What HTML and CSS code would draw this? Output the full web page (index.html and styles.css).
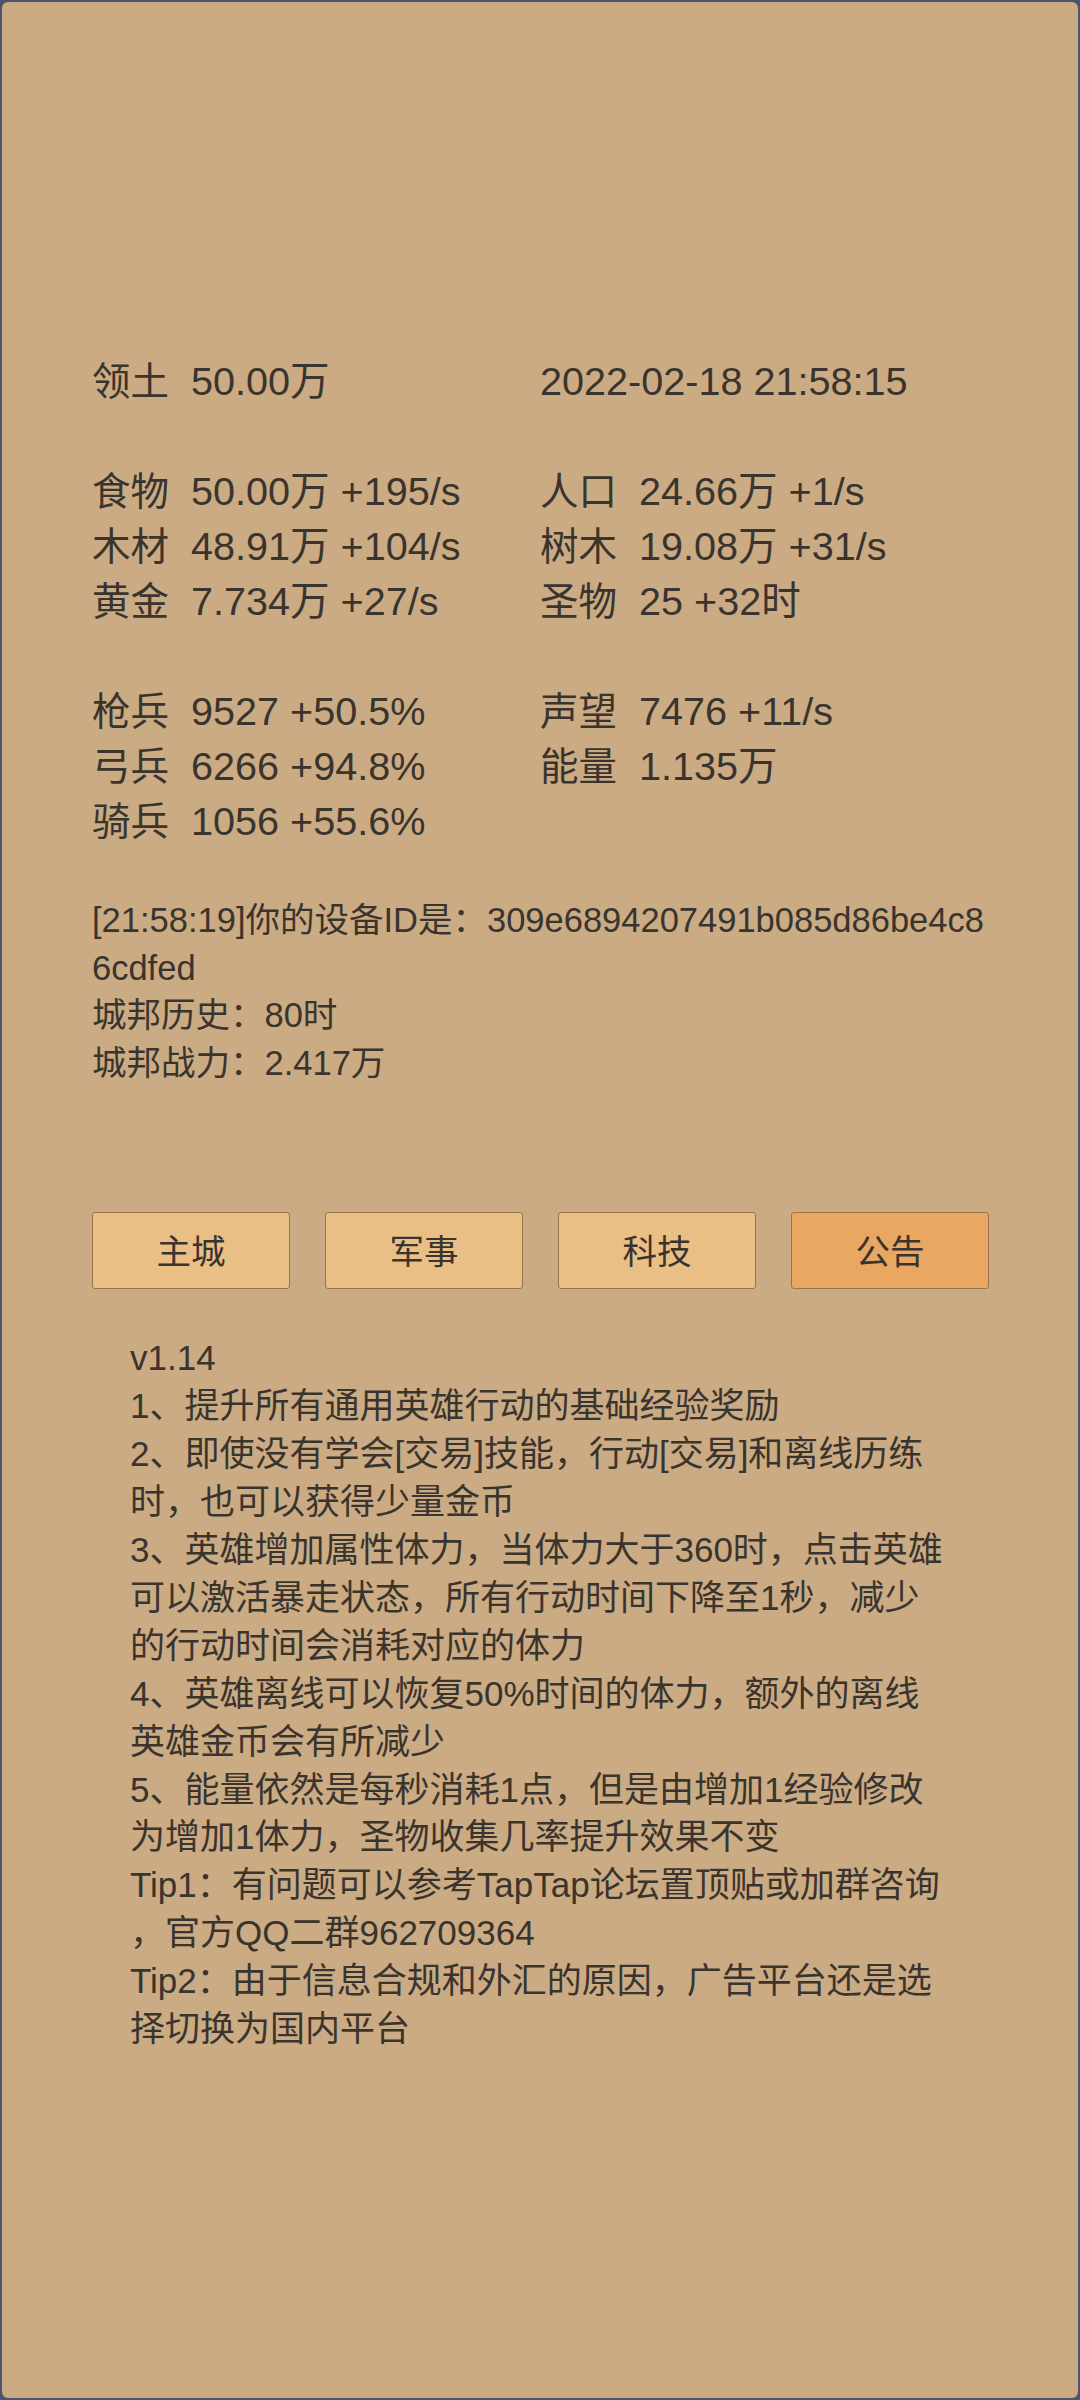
FILE: index.html
```html
<!DOCTYPE html>
<html lang="zh-CN">
<head>
<meta charset="utf-8">
<title>城邦</title>
<link rel="stylesheet" href="styles.css">
</head>
<body>
<div class="screen">
  <section class="stats">
    <div class="group">
      <div class="row">
        <div class="cell"><span class="label">领土</span><span class="val">50.00万</span></div>
        <div class="cell"><span class="val date">2022-02-18 21:58:15</span></div>
      </div>
    </div>
    <div class="group">
      <div class="row">
        <div class="cell"><span class="label">食物</span><span class="val">50.00万 +195/s</span></div>
        <div class="cell"><span class="label">人口</span><span class="val">24.66万 +1/s</span></div>
      </div>
      <div class="row">
        <div class="cell"><span class="label">木材</span><span class="val">48.91万 +104/s</span></div>
        <div class="cell"><span class="label">树木</span><span class="val">19.08万 +31/s</span></div>
      </div>
      <div class="row">
        <div class="cell"><span class="label">黄金</span><span class="val">7.734万 +27/s</span></div>
        <div class="cell"><span class="label">圣物</span><span class="val">25 +32时</span></div>
      </div>
    </div>
    <div class="group">
      <div class="row">
        <div class="cell"><span class="label">枪兵</span><span class="val">9527 +50.5%</span></div>
        <div class="cell"><span class="label">声望</span><span class="val">7476 +11/s</span></div>
      </div>
      <div class="row">
        <div class="cell"><span class="label">弓兵</span><span class="val">6266 +94.8%</span></div>
        <div class="cell"><span class="label">能量</span><span class="val">1.135万</span></div>
      </div>
      <div class="row">
        <div class="cell"><span class="label">骑兵</span><span class="val">1056 +55.6%</span></div>
        <div class="cell"></div>
      </div>
    </div>
  </section>

  <section class="info">
    <div class="line">[21:58:19]你的设备ID是：309e6894207491b085d86be4c8</div>
    <div class="line">6cdfed</div>
    <div class="line">城邦历史：80时</div>
    <div class="line">城邦战力：2.417万</div>
  </section>

  <nav class="tabs">
    <div class="tab">主城</div>
    <div class="tab">军事</div>
    <div class="tab">科技</div>
    <div class="tab active">公告</div>
  </nav>

  <section class="notice">
    <div class="line">v1.14</div>
    <div class="line">1、提升所有通用英雄行动的基础经验奖励</div>
    <div class="line">2、即使没有学会[交易]技能，行动[交易]和离线历练</div>
    <div class="line">时，也可以获得少量金币</div>
    <div class="line">3、英雄增加属性体力，当体力大于360时，点击英雄</div>
    <div class="line">可以激活暴走状态，所有行动时间下降至1秒，减少</div>
    <div class="line">的行动时间会消耗对应的体力</div>
    <div class="line">4、英雄离线可以恢复50%时间的体力，额外的离线</div>
    <div class="line">英雄金币会有所减少</div>
    <div class="line">5、能量依然是每秒消耗1点，但是由增加1经验修改</div>
    <div class="line">为增加1体力，圣物收集几率提升效果不变</div>
    <div class="line">Tip1：有问题可以参考TapTap论坛置顶贴或加群咨询</div>
    <div class="line">，官方QQ二群962709364</div>
    <div class="line">Tip2：由于信息合规和外汇的原因，广告平台还是选</div>
    <div class="line">择切换为国内平台</div>
  </section>
</div>
</body>
</html>
```

FILE: styles.css
```css
* { box-sizing: border-box; }

html, body {
  margin: 0;
  padding: 0;
  background: #4c566c;
}

body {
  font-family: "Liberation Sans", "Noto Sans CJK SC", sans-serif;
  color: #3a342e;
}

.screen {
  width: 1080px;
  height: 2400px;
  border: 2px solid #4c566c;
  border-radius: 8px;
  background: #cbab83;
  overflow: hidden;
  padding: 352px 0 0 90px;
}

.stats {
  font-size: 39.6px;
  line-height: 55px;
  display: flex;
  flex-direction: column;
  gap: 55px;
}

.row {
  display: grid;
  grid-template-columns: 448px 1fr;
  height: 55px;
}

.cell {
  display: flex;
  gap: 20px;
  white-space: nowrap;
}

.label {
  width: 79px;
  flex: none;
  font-size: 38.5px;
}

.info {
  margin-top: 48px;
  font-size: 34.5px;
  line-height: 47.6px;
}

.line {
  white-space: nowrap;
}

.tabs {
  margin-top: 125px;
  width: 897px;
  display: grid;
  grid-template-columns: repeat(4, 1fr);
  gap: 35px;
}

.tab {
  height: 77px;
  padding-bottom: 3px;
  background: #e9bf85;
  border: 1.5px solid #9a7448;
  border-radius: 3px;
  display: flex;
  align-items: center;
  justify-content: center;
  font-size: 34.5px;
}

.tab.active {
  background: #eaa762;
}

.notice {
  margin-top: 45px;
  padding-left: 38px;
  font-size: 35px;
  line-height: 47.9px;
}
```
